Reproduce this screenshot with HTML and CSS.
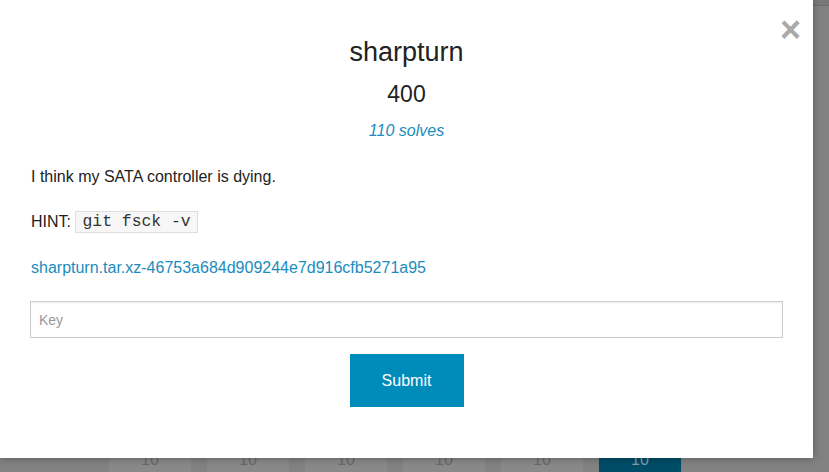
FILE: index.html
```html
<!DOCTYPE html>
<html>
<head>
<meta charset="utf-8">
<title>sharpturn</title>
<link rel="stylesheet" href="styles.css">
</head>
<body>
<div class="page">
  <div class="topbar"></div>
  <div class="tiles">
    <div class="tile">10</div>
    <div class="tile">10</div>
    <div class="tile">10</div>
    <div class="tile">10</div>
    <div class="tile">10</div>
    <div class="tile solved">10</div>
  </div>
</div>
<div class="modal">
  <a class="close">&#215;</a>
  <h2 class="title">sharpturn</h2>
  <h3 class="value">400</h3>
  <div class="solves">110 solves</div>
  <p class="desc">I think my SATA controller is dying.</p>
  <p class="hint">HINT: <code class="code">git fsck -v</code></p>
  <p class="file"><a class="link">sharpturn.tar.xz-46753a684d909244e7d916cfb5271a95</a></p>
  <input class="key" type="text" placeholder="Key">
  <div class="actions"><button class="submit">Submit</button></div>
</div>
</body>
</html>
```
FILE: styles.css
```css
html, body {
  margin: 0;
  padding: 0;
}
body {
  width: 829px;
  height: 472px;
  overflow: hidden;
  background: #828282;
  font-family: "Liberation Sans", Arial, sans-serif;
  position: relative;
}
.page {
  display: flex;
  flex-direction: column;
}
.topbar {
  height: 5px;
  background: #787878;
  border-bottom: 1px solid #6c6c6c;
}
.tiles {
  display: flex;
  gap: 16px;
  padding-left: 109px;
  margin-top: 434px;
}
.tile {
  width: 82px;
  height: 40px;
  background: #898989;
  color: #6a6a6a;
  font-size: 16px;
  text-align: center;
  line-height: 40px;
}
.tile.solved {
  background: #004d68;
  color: #7f9eaa;
}
.modal {
  position: absolute;
  left: 0;
  top: 0;
  width: 813px;
  height: 458px;
  box-sizing: border-box;
  background: #fff;
  padding: 34px 30px 0 30px;
  box-shadow: 0 0 8px rgba(0, 0, 0, 0.35);
  color: #222;
}
.close {
  position: absolute;
  top: 12px;
  right: 12px;
  font-size: 36px;
  line-height: 1;
  font-weight: bold;
  color: #aaa;
}
.title {
  margin: 0;
  font-size: 27px;
  line-height: 36px;
  font-weight: normal;
  text-align: center;
}
.value {
  margin: 9px 0 0;
  font-size: 23px;
  line-height: 30px;
  font-weight: normal;
  text-align: center;
}
.solves {
  margin-top: 11px;
  font-size: 16px;
  line-height: 22px;
  font-style: italic;
  text-align: center;
  color: #1a8cbd;
}
.desc {
  margin: 24px 0 0 1px;
  font-size: 16px;
  line-height: 22px;
}
.hint {
  margin: 23px 0 0 1px;
  font-size: 16px;
  line-height: 22px;
}
.code {
  display: inline-block;
  font-family: "Liberation Mono", "DejaVu Sans Mono", monospace;
  font-size: 16.4px;
  line-height: 20px;
  padding: 0 6px;
  background: #f7f7f7;
  border: 1px solid #dedede;
  color: #333;
  vertical-align: top;
}
.file {
  margin: 24px 0 0 1px;
  font-size: 16px;
  line-height: 22px;
}
.link {
  color: #1a8cbd;
}
.key {
  display: block;
  margin-top: 22px;
  width: 100%;
  height: 37px;
  box-sizing: border-box;
  border: 1px solid #ccc;
  padding: 0 8px;
  font-family: "Liberation Sans", Arial, sans-serif;
  font-size: 14px;
  box-shadow: inset 0 1px 2px rgba(0, 0, 0, 0.08);
}
.key::placeholder {
  color: #999;
}
.actions {
  display: flex;
  justify-content: center;
  margin-top: 16px;
}
.submit {
  width: 114px;
  height: 53px;
  border: none;
  background: #008cba;
  color: #fff;
  font-family: "Liberation Sans", Arial, sans-serif;
  font-size: 16px;
  padding: 0;
}
```
